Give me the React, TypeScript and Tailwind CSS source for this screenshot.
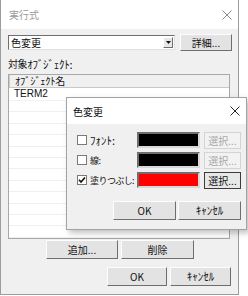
import { ReactNode } from "react";

const FONT = "font-['Noto_Sans_CJK_JP','Noto_Sans',sans-serif]";

const CloseIcon = ({ color }: { color: string }) => (
  <svg width="10" height="10" viewBox="0 0 10 10">
    <path d="M0.5 0.5 L9.5 9.5 M9.5 0.5 L0.5 9.5" stroke={color} strokeWidth="1" />
  </svg>
);

// raised 3D push button
const Btn = ({ children, w, disabled, focus }: { children: ReactNode; w: string; disabled?: boolean; focus?: boolean }) => {
  if (disabled) {
    return (
      <div className={`${w} h-[17px] flex items-center justify-center border border-[#d3d3d3] bg-[#f2f2f2] text-[#a8a8a8] text-[10px] whitespace-nowrap`}>
        {children}
      </div>
    );
  }
  return (
    <div
      className={`${w} h-full flex items-center justify-center border text-[10px] text-[#111] whitespace-nowrap ${
        focus
          ? "border-[#3c3c3c] bg-[#e8e8e8]"
          : "border-t-[#fdfdfd] border-l-[#fdfdfd] border-r-[#6e6e6e] border-b-[#6e6e6e] bg-[#e3e3e3]"
      }`}
    >
      {children}
    </div>
  );
};

const Check = ({ checked }: { checked?: boolean }) => (
  <div className="shrink-0 w-[10px] h-[10px] border border-[#7a7a7a] bg-white flex items-center justify-center">
    {checked && (
      <svg width="8" height="8" viewBox="0 0 8 8">
        <path d="M1 3.8 L3 6 L7 1.5" stroke="#111" strokeWidth="1.6" fill="none" />
      </svg>
    )}
  </div>
);

const ColorRow = ({ label, color, checked, half }: { label: string; color: string; checked?: boolean; half?: boolean }) => (
  <div className="flex items-center h-[16px]">
    <div className="w-[60px] shrink-0 flex items-center gap-[3px]">
      <Check checked={checked} />
      <span
        className={`leading-none whitespace-nowrap text-[#111] ${
          half ? "text-[11px]" : "text-[9px] tracking-[-0.6px]"
        }`}
      >
        {label}
      </span>
    </div>
    <div className={`w-[63px] h-[16px] border-2 border-t-[#6e6e6e] border-l-[#6e6e6e] border-r-[#d8d8d8] border-b-[#d8d8d8] ${color}`} />
    <div className="ml-[4px] h-[17px]">
      <Btn w="w-[37px]" disabled={!checked} focus={checked}>選択...</Btn>
    </div>
  </div>
);

export default function App() {
  return (
    <div className={`relative w-[248px] h-[296px] bg-white overflow-hidden ${FONT}`}>
      {/* ===== main window ===== */}
      <div className="w-[239px] h-[295px] border border-t-0 border-[#9c9c9c] flex flex-col bg-[#f0f0f0]">
        <div className="h-[29px] bg-white flex items-center justify-between pl-[8px] pr-[6px]">
          <span className="text-[10px] text-[#9a9a9a]">実行式</span>
          <CloseIcon color="#8a8a8a" />
        </div>

        <div className="flex flex-col pl-[7px] pt-[5px]">
          <div className="flex items-center h-[17px]">
            <div className="w-[167px] h-[15px] border border-t-[#6e6e6e] border-l-[#6e6e6e] border-r-[#e0e0e0] border-b-[#e0e0e0] bg-white flex items-center justify-between pl-[2px] pr-[1px]">
              <span className="text-[10px] leading-none text-[#111]">色変更</span>
              <div className="w-[10px] h-[11px] bg-[#e6e6e6] border border-t-white border-l-white border-r-[#6e6e6e] border-b-[#6e6e6e] flex items-center justify-center">
                <svg width="5" height="3" viewBox="0 0 5 3">
                  <path d="M0 0 H5 L2.5 3 Z" fill="#111" />
                </svg>
              </div>
            </div>
            <div className="ml-[5px] h-[17px]">
              <Btn w="w-[52px]">詳細...</Btn>
            </div>
          </div>

          <div className="mt-[7px] h-[12px] flex items-center text-[#111] whitespace-nowrap">
            <span className="text-[10px] leading-none tracking-[-0.4px]">対象</span>
            <span className="text-[11px] leading-none tracking-[-0.3px]">ｵﾌﾞｼﾞｪｸﾄ:</span>
          </div>

          <div className="mt-[4px] w-[222px] h-[165px] border border-[#a8a8a8] bg-white flex flex-col overflow-hidden">
            <div className="h-[13px] shrink-0 flex bg-[#f0f0f0] border-b border-[#c8c8c8]">
              <div className="w-[220px] pl-[5px] flex items-center text-[#111] border-l border-[#c8c8c8] whitespace-nowrap">
                <span className="text-[10.5px] leading-none tracking-[-0.3px]">ｵﾌﾞｼﾞｪｸﾄ</span>
                <span className="text-[10px] leading-none">名</span>
              </div>
            </div>
            <div className="flex flex-col">
              <div className="h-[13px] shrink-0 pl-[5px] flex items-center text-[10px] leading-none font-['Liberation_Sans',sans-serif] text-[#111] border-b border-[#f2f2f2]">
                TERM2
              </div>
              {Array.from({ length: 13 }).map((_, i) => (
                <div key={i} className="h-[11.4px] shrink-0 border-b border-[#efefef]" />
              ))}
            </div>
          </div>

          <div className="mt-[1px] h-[19px] flex pl-[38px] gap-[3px]">
            <Btn w="w-[72px]">追加...</Btn>
            <Btn w="w-[73px]">削除</Btn>
          </div>

          <div className="mt-[8px] h-[19px] flex pl-[99px] gap-[3px]">
            <Btn w="w-[60px]">OK</Btn>
            <Btn w="w-[61px]">
              <span className="text-[11px]">ｷｬﾝｾﾙ</span>
            </Btn>
          </div>
        </div>
      </div>

      {/* ===== 色変更 dialog (overlay) ===== */}
      <div className="absolute left-[66px] top-[97px] w-[181px] h-[133px] border border-[#a3a3a3] bg-[#f0f0f0] flex flex-col shadow-[3px_3px_6px_rgba(0,0,0,0.25)]">
        <div className="h-[26px] bg-white flex items-center justify-between pl-[6px] pr-[6px]">
          <span className="text-[10px] text-[#111]">色変更</span>
          <CloseIcon color="#222" />
        </div>
        <div className="flex flex-col pl-[10px] pt-[8px] gap-[4px]">
          <ColorRow label="ﾌｫﾝﾄ:" color="bg-black" half />
          <ColorRow label="線:" color="bg-black" />
          <ColorRow label="塗りつぶし:" color="bg-[#ff0000]" checked />
        </div>
        <div className="mt-[13px] h-[19px] flex pl-[46px] gap-[2px]">
          <Btn w="w-[63px]">OK</Btn>
          <Btn w="w-[63px]">
            <span className="text-[11px]">ｷｬﾝｾﾙ</span>
          </Btn>
        </div>
      </div>
    </div>
  );
}
